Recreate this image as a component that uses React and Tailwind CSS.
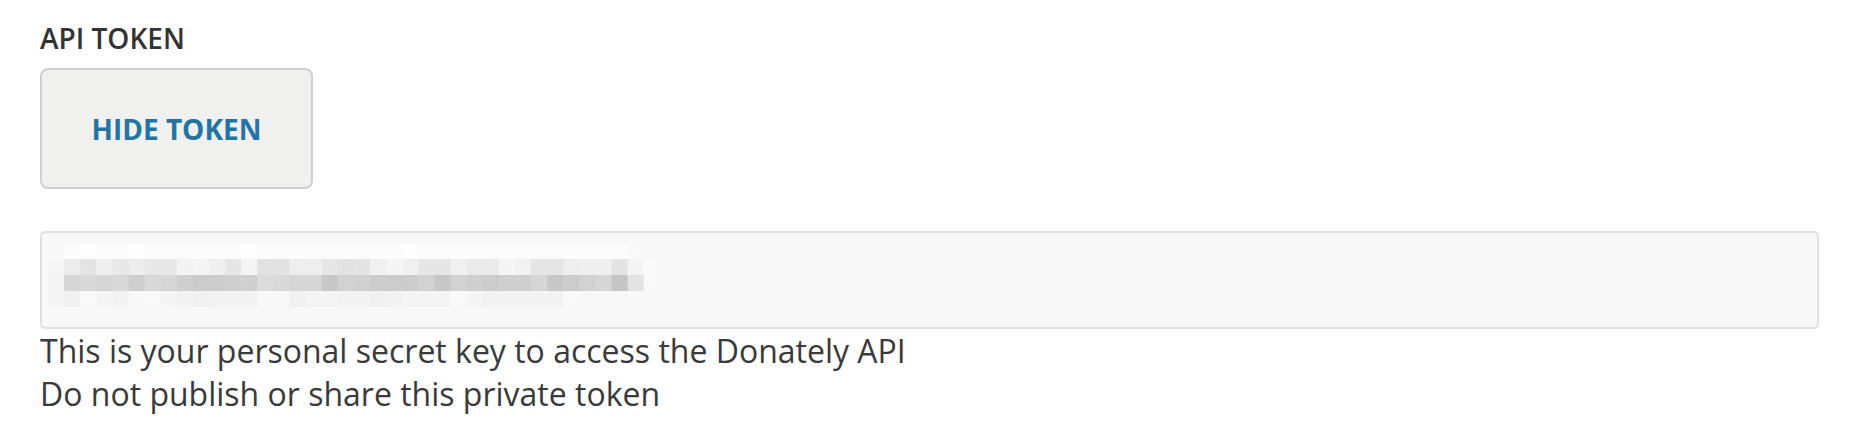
import React from "react";

const rows = [
  ["f8","fc","fd","fc","fc","fd","fc","fc","fb","fc","fc","fc","fd","fc","fb","fc","fb","fc","fc","fc","fc","fc","fd","fc","fc","fc","fc","fb","fc","fb","fc","fc","fc","fc","fc","fc","f9","f8","f8"],
  ["f6","ec","e4","ef","e8","ed","e8","e8","f3","f5","ef","e6","f4","e2","e2","ee","ee","e6","e2","e4","f0","f5","f0","e6","e6","f0","ea","ea","f5","f2","e5","e5","ee","ef","ef","e3","f4","fa","f8"],
  ["f4","d6","d9","d6","d9","cf","d9","d6","cf","cc","cc","cf","cf","dc","d9","d6","d6","c8","d2","d0","cc","cc","cc","d2","c8","d2","cf","cc","cf","cf","d6","c8","cc","d2","d6","c5","e3","fa","f8"],
  ["f5","f0","fa","f5","f2","f8","fa","f5","f2","f0","f2","f2","f2","f8","f8","f0","f4","f4","f2","f2","f0","f2","f4","f4","f4","f9","f5","f2","f2","f2","f2","f2","f9","f8","f8","f8","f8","f8","f8"],
];

function Mosaic() {
  const cw = 16.1;
  const ch = 16;
  return (
    <svg width={39 * cw} height={4 * ch} className="block" style={{ filter: "blur(0.6px)" }}>
      {rows.map((r, y) =>
        r.map((v, x) => (
          <rect key={x + "-" + y} x={x * cw} y={y * ch} width={cw + 0.5} height={ch + 0.5} fill={"#" + v + v + v} />
        ))
      )}
    </svg>
  );
}

export default function App() {
  return (
    <div className="bg-white w-[1866px] h-[438px] pl-10 pr-[47px] pt-[19px]" style={{ fontFamily: '"Open Sans", sans-serif' }}>
      <div className="text-[28px] leading-[38px] font-semibold text-[#333333]">API TOKEN</div>
      <button className="mt-[11px] w-[273px] h-[121px] flex items-center justify-center rounded-[8px] border-2 border-[#cfcfcf] bg-[#f0f0ef] text-[28px] font-bold text-[#2474a3] leading-none">
        HIDE TOKEN
      </button>
      <div className="mt-[42px] h-[98px] rounded-[5px] border-2 border-[#e0e0e0] bg-[#f8f8f8] flex items-start pl-[6px] pt-[10px]">
        <Mosaic />
      </div>
      <div className="text-[32px] leading-[43px] text-[#3a3a3a]">
        <div>This is your personal secret key to access the Donately API</div>
        <div>Do not publish or share this private token</div>
      </div>
    </div>
  );
}
